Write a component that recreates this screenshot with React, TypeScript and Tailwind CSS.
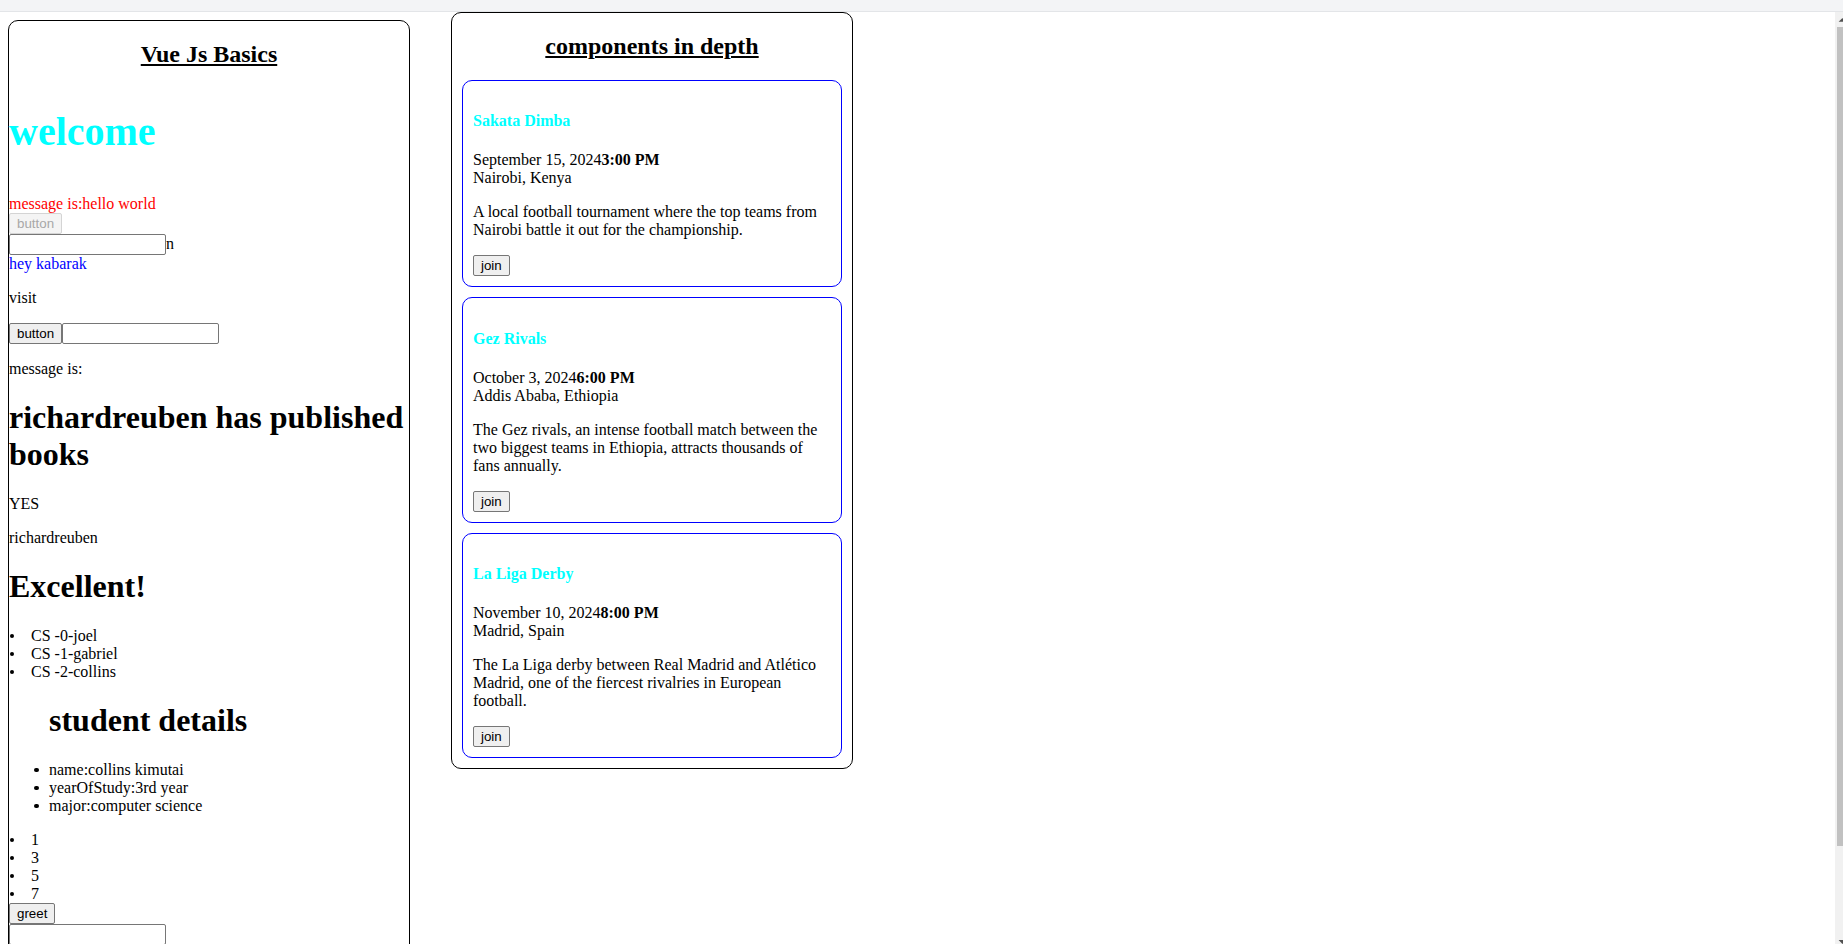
import React from "react";

const events = [
  {
    title: "Sakata Dimba",
    date: "September 15, 2024",
    time: "3:00 PM",
    place: "Nairobi, Kenya",
    desc: "A local football tournament where the top teams from Nairobi battle it out for the championship.",
  },
  {
    title: "Gez Rivals",
    date: "October 3, 2024",
    time: "6:00 PM",
    place: "Addis Ababa, Ethiopia",
    desc: "The Gez rivals, an intense football match between the two biggest teams in Ethiopia, attracts thousands of fans annually.",
  },
  {
    title: "La Liga Derby",
    date: "November 10, 2024",
    time: "8:00 PM",
    place: "Madrid, Spain",
    desc: "The La Liga derby between Real Madrid and Atlético Madrid, one of the fiercest rivalries in European football.",
  },
];

function Btn({ children, disabled }: { children: React.ReactNode; disabled?: boolean }) {
  return disabled ? (
    <button
      disabled
      className="h-[21px] rounded-[2px] border border-[#d4d4d4] bg-[#f4f4f4] px-[7px] font-['Liberation_Sans',Arial,sans-serif] text-[13.333px] leading-[normal] text-[#a8a8a8]"
    >
      {children}
    </button>
  ) : (
    <button className="h-[21px] rounded-[2px] border border-[#767676] bg-[#efefef] px-[7px] font-['Liberation_Sans',Arial,sans-serif] text-[13.333px] leading-[normal] text-black">
      {children}
    </button>
  );
}

function Field() {
  return (
    <input
      type="text"
      className="h-[21px] w-[157px] rounded-[2px] border border-[#767676] bg-white px-[2px] font-['Liberation_Sans',Arial,sans-serif] text-[13.333px] leading-[normal] text-black outline-none"
    />
  );
}

function Bullet({ children }: { children: React.ReactNode }) {
  return (
    <li className="flex">
      <span className="flex w-[22px] shrink-0 items-start pl-[0.5px] pt-[7px]">
        <span className="h-[4.5px] w-[4.5px] rounded-full bg-black" />
      </span>
      <span>{children}</span>
    </li>
  );
}

function SubBullet({ children }: { children: React.ReactNode }) {
  return (
    <li className="-ml-[15px] flex">
      <span className="flex w-[15px] shrink-0 items-start pt-[7px]">
        <span className="h-[4.5px] w-[4.5px] rounded-full bg-black" />
      </span>
      <span>{children}</span>
    </li>
  );
}

function ScrollBar() {
  return (
    <aside className="flex w-[8px] shrink-0 flex-col overflow-hidden bg-[#f1f1f1]">
      <div className="h-[15px] shrink-0">
        <svg width="8" height="15" viewBox="0 0 8 15" className="block">
          <polygon points="3.6,9.8 11.4,9.8 7.5,6" fill="#505050" />
        </svg>
      </div>
      <div className="min-h-0 flex-1">
        <div className="ml-[2px] h-[819px] bg-[#c1c1c1]" />
      </div>
      <div className="h-[15px] shrink-0">
        <svg width="8" height="15" viewBox="0 0 8 15" className="block">
          <polygon points="3.6,11 11.4,11 7.5,15" fill="#505050" />
        </svg>
      </div>
    </aside>
  );
}

export default function App() {
  return (
    <div className="flex h-screen flex-col bg-white font-['Liberation_Serif','Times_New_Roman',serif] text-[16px] leading-[normal] text-black">
      <div className="h-[12px] shrink-0 border-b border-[#e3e5e8] bg-[#f3f4f6]" />
      <div className="flex min-h-0 flex-1">
        <main className="min-w-0 flex-1 overflow-hidden">
          <div className="flex items-start pb-[8px]">
            {/* Left card */}
            <section className="ml-[8px] mt-[8px] w-[402px] shrink-0 rounded-[10px] border border-black pb-[85px]">
              <h2 className="my-[19.92px] text-center text-[24px] font-bold leading-[normal] underline">Vue Js Basics</h2>
              <h1 className="my-[40px] text-[40px] font-bold leading-[normal] text-[#00ffff]">welcome</h1>
              <div className="text-[#ff0000]">message is:hello world</div>
              <div className="flex">
                <Btn disabled>button</Btn>
              </div>
              <div className="flex items-baseline">
                <Field />
                <span>n</span>
              </div>
              <div className="text-[#0000ff]">hey kabarak</div>
              <p className="my-[16px]">visit</p>
              <div className="my-[16px] flex">
                <Btn>button</Btn>
                <Field />
              </div>
              <p className="my-[16px]">message is:</p>
              <h1 className="my-[21.44px] text-[32px] font-bold leading-[normal]">richardreuben has published books</h1>
              <p className="my-[16px]">YES</p>
              <p className="my-[16px]">richardreuben</p>
              <h1 className="my-[21.44px] text-[32px] font-bold leading-[normal]">Excellent!</h1>
              <ul>
                <Bullet>CS -0-joel</Bullet>
                <Bullet>CS -1-gabriel</Bullet>
                <Bullet>CS -2-collins</Bullet>
              </ul>
              <div className="mb-[16px] pl-[40px]">
                <h1 className="my-[21.44px] text-[32px] font-bold leading-[normal]">student details</h1>
                <ul>
                  <SubBullet>name:collins kimutai</SubBullet>
                  <SubBullet>yearOfStudy:3rd year</SubBullet>
                  <SubBullet>major:computer science</SubBullet>
                </ul>
              </div>
              <ul>
                <Bullet>1</Bullet>
                <Bullet>3</Bullet>
                <Bullet>5</Bullet>
                <Bullet>7</Bullet>
              </ul>
              <div className="flex">
                <Btn>greet</Btn>
              </div>
              <div className="flex">
                <Field />
              </div>
            </section>

            {/* Right card */}
            <section className="ml-[41px] w-[402px] shrink-0 rounded-[10px] border border-black">
              <h2 className="my-[19.92px] text-center text-[24px] font-bold leading-[normal] underline">components in depth</h2>
              {events.map((e) => (
                <div key={e.title} className="m-[10px] rounded-[10px] border border-[#0000ff] p-[10px]">
                  <h4 className="my-[21.28px] font-bold text-[#00ffff]">{e.title}</h4>
                  <p className="mb-[16px] mt-[21.28px]">
                    {e.date}
                    <b className="font-bold">{e.time}</b>
                    <br />
                    {e.place}
                  </p>
                  <p className="my-[16px]">{e.desc}</p>
                  <div className="flex">
                    <Btn>join</Btn>
                  </div>
                </div>
              ))}
            </section>
          </div>
        </main>
        <ScrollBar />
      </div>
    </div>
  );
}
